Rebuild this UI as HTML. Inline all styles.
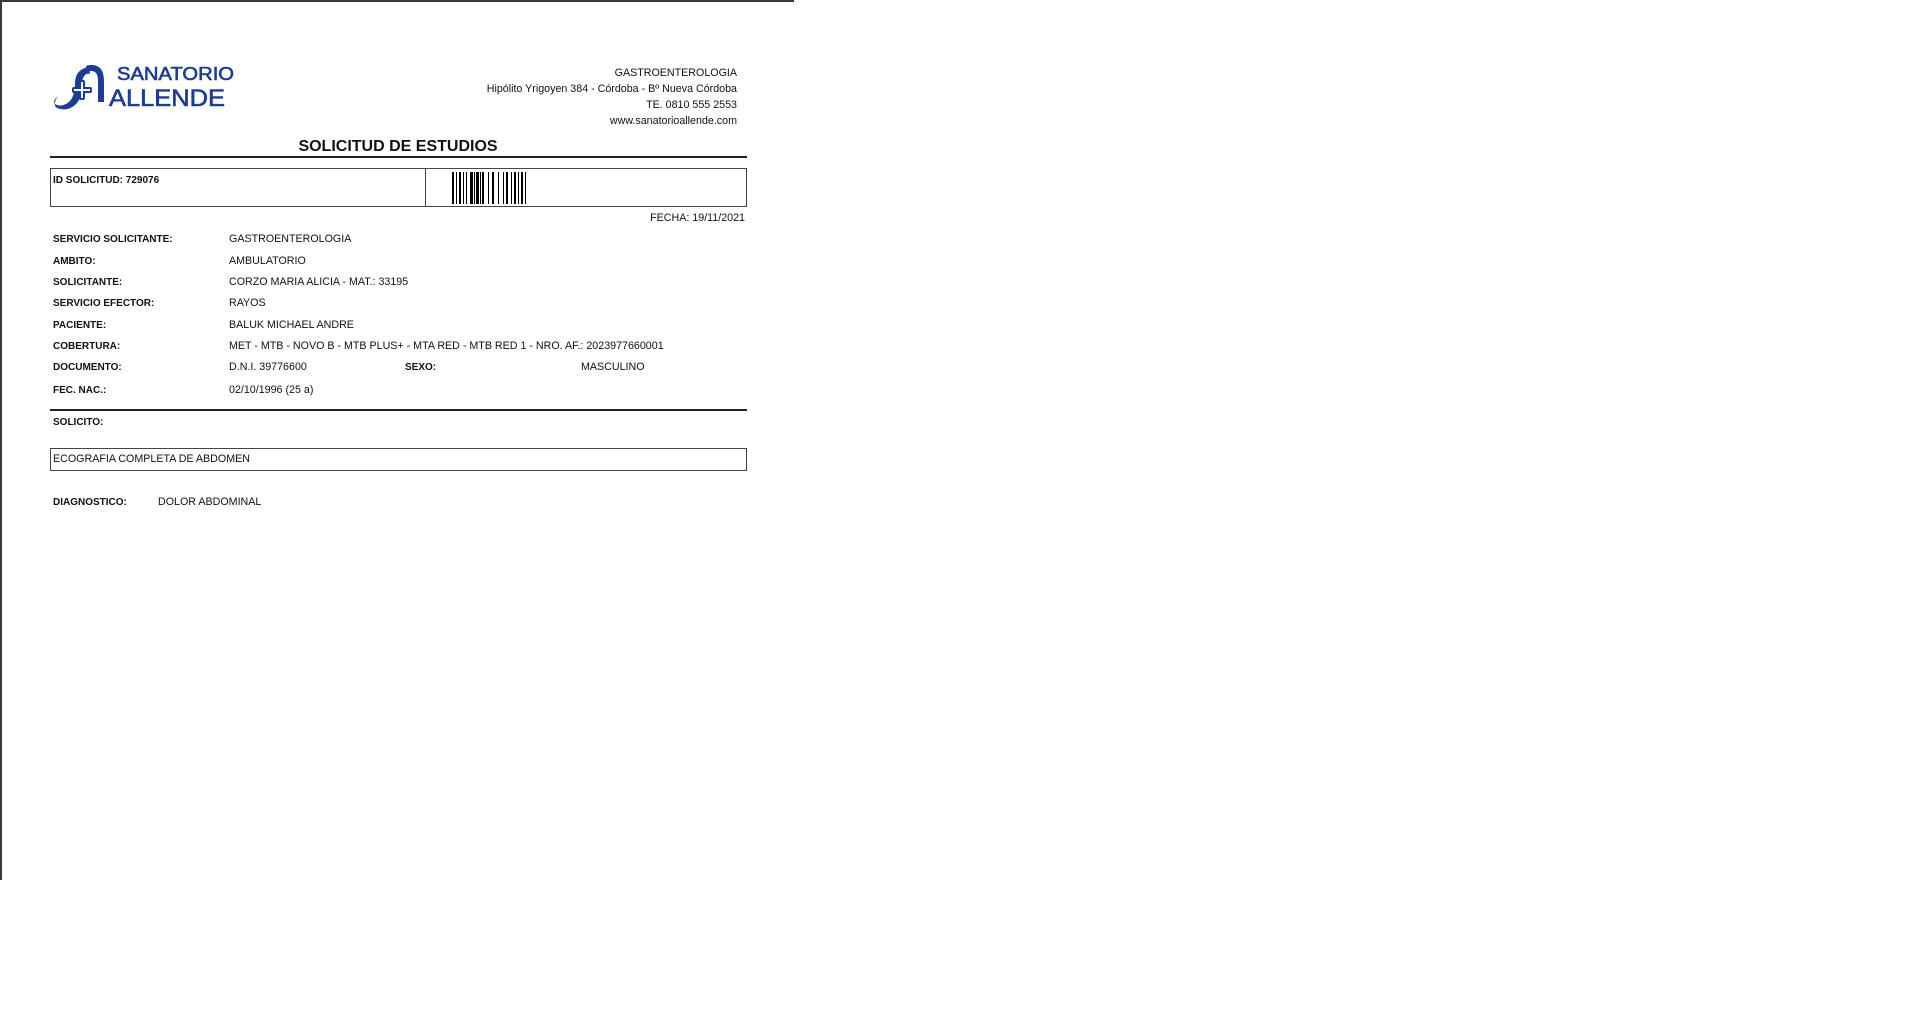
<!DOCTYPE html>
<html><head><meta charset="utf-8"><style>
html,body{margin:0;padding:0;background:#fff;width:1914px;height:1027px;overflow:hidden;font-family:"Liberation Sans",sans-serif;color:#111}
.pg{position:absolute;left:0;top:0;width:794px;height:880px;border-left:2px solid #3a3a3a;border-top:2px solid #3a3a3a;box-sizing:border-box}
.t{position:absolute;font-size:10.7px;line-height:12px;white-space:nowrap}
.b{font-weight:bold;font-size:10px;margin-top:1px}
.r{text-align:right}
</style></head><body>
<div class="pg"></div>
<svg style="position:absolute;left:50px;top:60px" width="190" height="50" viewBox="0 0 190 50">
<g fill="#1e3c96">
<path d="M8 36 q-6 6 -3 8 q6 4 14 -2 q6 -6 6 -18 q0 -10 6 -14 q4 -3 8 -2 l1 6 q-3 -1 -5 1 q-3 3 -3 10 q0 14 -7 20 q-8 7 -18 3 q-5 -3 1 -12z"/>
<path d="M36 6 q8 -3 14 2 q4 4 4 14 l0 20 l-6 0 l0 -20 q0 -8 -3 -10 q-3 -2 -9 0z"/>
<rect x="29" y="20" width="6" height="20" rx="2"/><rect x="22" y="27" width="20" height="6" rx="2"/>
</g>
<rect x="31" y="22" width="2" height="16" fill="#fff"/><rect x="24" y="29" width="16" height="2" fill="#fff"/>
<text x="67" y="20" font-family="Liberation Sans" font-size="18" fill="#1e3c96" stroke="#1e3c96" stroke-width="0.6" textLength="117" lengthAdjust="spacingAndGlyphs">SANATORIO</text>
<text x="59" y="46" font-family="Liberation Sans" font-size="24" fill="#1e3c96" stroke="#1e3c96" stroke-width="0.6" textLength="116" lengthAdjust="spacingAndGlyphs">ALLENDE</text>
</svg>
<div class="t r" style="right:1177px;top:67px">GASTROENTEROLOGIA</div>
<div class="t r" style="right:1177px;top:83px">Hipólito Yrigoyen 384 - Córdoba - Bº Nueva Córdoba</div>
<div class="t r" style="right:1177px;top:99px">TE. 0810 555 2553</div>
<div class="t r" style="right:1177px;top:115px">www.sanatorioallende.com</div>
<div class="t" style="left:246px;top:137px;font-size:16px;line-height:19px;width:304px;text-align:center;font-weight:bold">SOLICITUD DE ESTUDIOS</div>
<div style="position:absolute;left:50px;top:156px;width:697px;height:2px;background:#222"></div>
<div style="position:absolute;left:50px;top:168px;width:697px;height:39px;border:1px solid #444;box-sizing:border-box"></div>
<div style="position:absolute;left:425px;top:168px;width:1px;height:39px;background:#444"></div>
<div class="t b" style="left:53px;top:174px">ID SOLICITUD: 729076</div>
<svg style="position:absolute;left:452px;top:172px" width="75" height="32">
<g fill="#000">
<rect x="0" y="0" width="2" height="32"/><rect x="4" y="0" width="1" height="32"/><rect x="7" y="0" width="2" height="32"/><rect x="11" y="0" width="1" height="32"/><rect x="14" y="0" width="1" height="32"/>
<rect x="18" y="0" width="3" height="32"/><rect x="22" y="0" width="1" height="32"/><rect x="24" y="0" width="3" height="32"/><rect x="28" y="0" width="1" height="32"/><rect x="30" y="0" width="2" height="32"/>
<rect x="36" y="0" width="1" height="32"/><rect x="40" y="0" width="2" height="32"/><rect x="46" y="0" width="1" height="32"/><rect x="51" y="0" width="1" height="32"/><rect x="54" y="0" width="2" height="32"/>
<rect x="59" y="0" width="1" height="32"/><rect x="62" y="0" width="2" height="32"/><rect x="66" y="0" width="1" height="32"/><rect x="69" y="0" width="2" height="32"/><rect x="73" y="0" width="1" height="32"/>
</g></svg>
<div class="t r" style="right:1169px;top:212px">FECHA: 19/11/2021</div>
<div class="t b" style="left:53px;top:233px">SERVICIO SOLICITANTE:</div><div class="t" style="left:229px;top:233px">GASTROENTEROLOGIA</div>
<div class="t b" style="left:53px;top:255px">AMBITO:</div><div class="t" style="left:229px;top:255px">AMBULATORIO</div>
<div class="t b" style="left:53px;top:276px">SOLICITANTE:</div><div class="t" style="left:229px;top:276px">CORZO MARIA ALICIA - MAT.: 33195</div>
<div class="t b" style="left:53px;top:297px">SERVICIO EFECTOR:</div><div class="t" style="left:229px;top:297px">RAYOS</div>
<div class="t b" style="left:53px;top:319px">PACIENTE:</div><div class="t" style="left:229px;top:319px">BALUK MICHAEL ANDRE</div>
<div class="t b" style="left:53px;top:340px">COBERTURA:</div><div class="t" style="left:229px;top:340px">MET - MTB - NOVO B - MTB PLUS+ - MTA RED - MTB RED 1 - NRO. AF.: 2023977660001</div>
<div class="t b" style="left:53px;top:361px">DOCUMENTO:</div><div class="t" style="left:229px;top:361px">D.N.I. 39776600</div>
<div class="t b" style="left:405px;top:361px">SEXO:</div><div class="t" style="left:581px;top:361px">MASCULINO</div>
<div class="t b" style="left:53px;top:384px">FEC. NAC.:</div><div class="t" style="left:229px;top:384px">02/10/1996 (25 a)</div>
<div style="position:absolute;left:50px;top:409px;width:697px;height:2px;background:#222"></div>
<div class="t b" style="left:53px;top:416px">SOLICITO:</div>
<div style="position:absolute;left:50px;top:448px;width:697px;height:23px;border:1px solid #444;box-sizing:border-box"></div>
<div class="t" style="left:53px;top:453px">ECOGRAFIA COMPLETA DE ABDOMEN</div>
<div class="t b" style="left:53px;top:496px">DIAGNOSTICO:</div><div class="t" style="left:158px;top:496px">DOLOR ABDOMINAL</div>
</body></html>
